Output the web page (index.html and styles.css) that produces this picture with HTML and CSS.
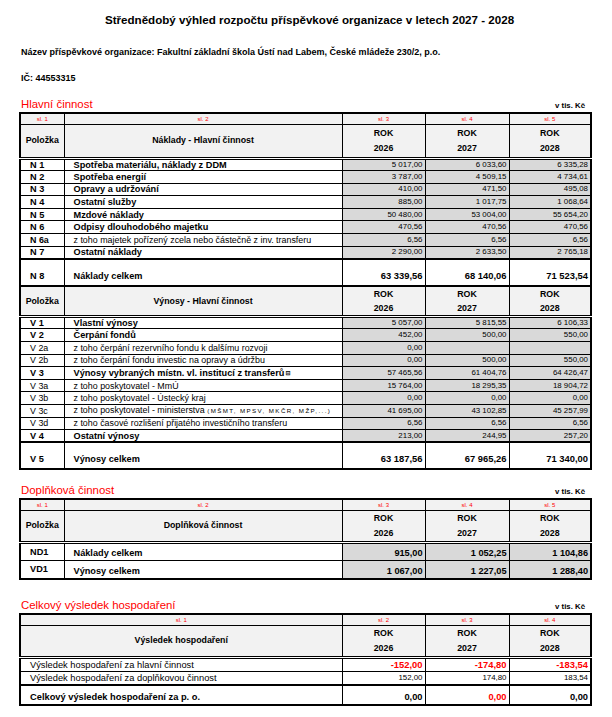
FILE: index.html
```html
<!DOCTYPE html>
<html lang="cs">
<head>
<meta charset="utf-8">
<title>Střednědobý výhled rozpočtu</title>
<link rel="stylesheet" href="styles.css">
</head>
<body>
<div class="page">
  <h1 class="title">Střednědobý výhled rozpočtu příspěvkové organizace v letech 2027 - 2028</h1>
  <p class="org">Název příspěvkové organizace: Fakultní základní škola Ústí nad Labem, České mládeže 230/2, p.o.</p>
  <p class="ic">IČ: 44553315</p>

  <div class="sec-head"><span class="sec-title">Hlavní činnost</span><span class="unit">v tis. Kč</span></div>
  <table class="grid">
    <colgroup><col class="c1"><col class="c2"><col class="c3"><col class="c4"><col class="c5"></colgroup>
    <tr class="sl"><td>sl. 1</td><td>sl. 2</td><td>sl. 3</td><td>sl. 4</td><td>sl. 5</td></tr>
    <tr class="hdr"><th>Položka</th><th>Náklady - Hlavní činnost</th><th>ROK<br>2026</th><th>ROK<br>2027</th><th>ROK<br>2028</th></tr>
    <tr class="r b"><td class="code">N 1</td><td class="lbl">Spotřeba materiálu, náklady z DDM</td><td class="num">5 017,00</td><td class="num">6 033,60</td><td class="num">6 335,28</td></tr>
    <tr class="r b"><td class="code">N 2</td><td class="lbl">Spotřeba energií</td><td class="num">3 787,00</td><td class="num">4 509,15</td><td class="num">4 734,61</td></tr>
    <tr class="r b"><td class="code">N 3</td><td class="lbl">Opravy a udržování</td><td class="num">410,00</td><td class="num">471,50</td><td class="num">495,08</td></tr>
    <tr class="r b"><td class="code">N 4</td><td class="lbl">Ostatní služby</td><td class="num">885,00</td><td class="num">1 017,75</td><td class="num">1 068,64</td></tr>
    <tr class="r b"><td class="code">N 5</td><td class="lbl">Mzdové náklady</td><td class="num">50 480,00</td><td class="num">53 004,00</td><td class="num">55 654,20</td></tr>
    <tr class="r b"><td class="code">N 6</td><td class="lbl">Odpisy dlouhodobého majetku</td><td class="num">470,56</td><td class="num">470,56</td><td class="num">470,56</td></tr>
    <tr class="r sub"><td class="code bc">N 6a</td><td class="lbl">z toho majetek pořízený zcela nebo částečně z inv. transferu</td><td class="num">6,56</td><td class="num">6,56</td><td class="num">6,56</td></tr>
    <tr class="r b"><td class="code">N 7</td><td class="lbl">Ostatní náklady</td><td class="num">2 290,00</td><td class="num">2 633,50</td><td class="num">2 765,18</td></tr>
    <tr class="tot"><td class="code">N 8</td><td class="lbl">Náklady celkem</td><td class="num">63 339,56</td><td class="num">68 140,06</td><td class="num">71 523,54</td></tr>
    <tr class="hdr hdr2"><th>Položka</th><th>Výnosy - Hlavní činnost</th><th>ROK<br>2026</th><th>ROK<br>2027</th><th>ROK<br>2028</th></tr>
    <tr class="r b"><td class="code">V 1</td><td class="lbl">Vlastní výnosy</td><td class="num">5 057,00</td><td class="num">5 815,55</td><td class="num">6 106,33</td></tr>
    <tr class="r b"><td class="code">V 2</td><td class="lbl">Čerpání fondů</td><td class="num">452,00</td><td class="num">500,00</td><td class="num">550,00</td></tr>
    <tr class="r sub"><td class="code">V 2a</td><td class="lbl">z toho čerpání rezervního fondu k dalšímu rozvoji</td><td class="num">0,00</td><td class="num"></td><td class="num"></td></tr>
    <tr class="r sub"><td class="code">V 2b</td><td class="lbl">z toho čerpání fondu investic na opravy a údržbu</td><td class="num">0,00</td><td class="num">500,00</td><td class="num">550,00</td></tr>
    <tr class="r b"><td class="code">V 3</td><td class="lbl">Výnosy vybraných místn. vl. institucí z transferů<span class="tofu">⊟</span></td><td class="num">57 465,56</td><td class="num">61 404,76</td><td class="num">64 426,47</td></tr>
    <tr class="r sub"><td class="code">V 3a</td><td class="lbl">z toho poskytovatel - MmÚ</td><td class="num">15 764,00</td><td class="num">18 295,35</td><td class="num">18 904,72</td></tr>
    <tr class="r sub"><td class="code">V 3b</td><td class="lbl">z toho poskytovatel - Ústecký kraj</td><td class="num">0,00</td><td class="num">0,00</td><td class="num">0,00</td></tr>
    <tr class="r sub"><td class="code">V 3c</td><td class="lbl">z toho poskytovatel - ministerstva <span class="tiny">(MŠMT, MPSV, MKČR, MŽP,...)</span></td><td class="num">41 695,00</td><td class="num">43 102,85</td><td class="num">45 257,99</td></tr>
    <tr class="r sub"><td class="code">V 3d</td><td class="lbl">z toho časové rozlišení přijatého investičního transferu</td><td class="num">6,56</td><td class="num">6,56</td><td class="num">6,56</td></tr>
    <tr class="r b"><td class="code">V 4</td><td class="lbl">Ostatní výnosy</td><td class="num">213,00</td><td class="num">244,95</td><td class="num">257,20</td></tr>
    <tr class="tot"><td class="code">V 5</td><td class="lbl">Výnosy celkem</td><td class="num">63 187,56</td><td class="num">67 965,26</td><td class="num">71 340,00</td></tr>
  </table>

  <div class="sec-head sec2"><span class="sec-title">Doplňková činnost</span><span class="unit">v tis. Kč</span></div>
  <table class="grid">
    <colgroup><col class="c1"><col class="c2"><col class="c3"><col class="c4"><col class="c5"></colgroup>
    <tr class="sl"><td>sl. 1</td><td>sl. 2</td><td>sl. 3</td><td>sl. 4</td><td>sl. 5</td></tr>
    <tr class="hdr hdr3"><th>Položka</th><th>Doplňková činnost</th><th>ROK<br>2026</th><th>ROK<br>2027</th><th>ROK<br>2028</th></tr>
    <tr class="dp"><td class="code">ND1</td><td class="lbl">Náklady celkem</td><td class="num">915,00</td><td class="num">1 052,25</td><td class="num">1 104,86</td></tr>
    <tr class="dp"><td class="code">VD1</td><td class="lbl">Výnosy celkem</td><td class="num">1 067,00</td><td class="num">1 227,05</td><td class="num">1 288,40</td></tr>
  </table>

  <div class="sec-head sec3"><span class="sec-title">Celkový výsledek hospodaření</span><span class="unit">v tis. Kč</span></div>
  <table class="grid res">
    <colgroup><col class="c1"><col class="c2"><col class="c3"><col class="c4"><col class="c5"></colgroup>
    <tr class="sl"><td colspan="2">sl. 1</td><td>sl. 2</td><td>sl. 3</td><td>sl. 4</td></tr>
    <tr class="hdr hdr3"><th colspan="2">Výsledek hospodaření</th><th>ROK<br>2026</th><th>ROK<br>2027</th><th>ROK<br>2028</th></tr>
    <tr class="rr"><td colspan="2" class="lbl">Výsledek hospodaření za hlavní činnost</td><td class="num neg">-152,00</td><td class="num neg">-174,80</td><td class="num neg">-183,54</td></tr>
    <tr class="rr"><td colspan="2" class="lbl">Výsledek hospodaření za doplňkovou činnost</td><td class="num">152,00</td><td class="num">174,80</td><td class="num">183,54</td></tr>
    <tr class="rt"><td colspan="2" class="lbl">Celkový výsledek hospodaření za p. o.</td><td class="num">0,00</td><td class="num neg">0,00</td><td class="num">0,00</td></tr>
  </table>
</div>
</body>
</html>
```

FILE: styles.css
```css
* { box-sizing: border-box; }
html, body { margin: 0; padding: 0; background: #fff; }
body {
  font-family: "Liberation Sans", Arial, sans-serif;
  color: #000;
  width: 612px;
}
.page { padding: 13px 0 0 19px; width: 612px; }

.title {
  margin: 0;
  padding-left: 10px;
  width: 571px;
  font-size: 11.6px;
  line-height: 14px;
  font-weight: bold;
  text-align: center;
}
.org {
  margin: 19px 0 0 2px;
  font-size: 9px;
  line-height: 12px;
  font-weight: bold;
}
.ic {
  margin: 14px 0 0 2px;
  font-size: 9px;
  line-height: 12px;
  font-weight: bold;
}

.sec-head {
  display: flex;
  justify-content: space-between;
  align-items: flex-end;
  width: 571px;
  margin-top: 12px;
  padding: 0 5px 0 2px;
  height: 15px;
}
.sec2 { margin-top: 12px; }
.sec3 { margin-top: 17px; }
.sec-title { color: #f00; font-size: 11.4px; line-height: 14px; }
.unit { font-size: 7.8px; font-weight: bold; line-height: 10px; }

.grid {
  border-collapse: collapse;
  table-layout: fixed;
  width: 571px;
  margin-top: 1px;
  border: 2px solid #000;
}
.c1 { width: 44px; }
.c2 { width: 278px; }
.c3 { width: 83px; }
.c4 { width: 84px; }
.c5 { width: 82px; }

.grid td, .grid th {
  border: 1px solid #000;
  padding: 0;
  white-space: nowrap;
  overflow: hidden;
}

.sl td {
  height: 11px;
  background: #f2f2f2;
  color: #f00;
  font-size: 6px;
  text-align: center;
  line-height: 8px;
}
.hdr th {
  height: 34px;
  background: #f2f2f2;
  font-size: 8.8px;
  line-height: 15px;
  font-weight: bold;
  text-align: center;
  border-bottom: 3px double #000;
}
.hdr2 th { border-top: 2px solid #000; height: 29px; line-height: 14px; }
.hdr3 th { height: 31px; }

.r td { height: 12.6px; font-size: 8.9px; line-height: 10px; }
.code { padding-left: 9px !important; text-align: left; }
.lbl { padding-left: 9px !important; text-align: left; }
.num {
  background: #d9d9d9;
  text-align: right;
  padding-right: 2px !important;
}
.r .num { font-size: 7.9px; }
.b .code, .b .lbl, .bc { font-weight: bold; }
.b .lbl, .b .code { font-size: 9.2px; }

.tofu { font-family: "DejaVu Sans", sans-serif; font-size: 6px; margin-left: 1px; vertical-align: 1px; }
.tiny { font-size: 6.2px; letter-spacing: 1.4px; }

.tot td {
  height: 27px;
  border-top: 2px solid #000;
  font-size: 9.2px;
  font-weight: bold;
  vertical-align: bottom;
  padding-bottom: 4px;
}
.tot .num { background: #fff; font-size: 9.4px; }

.dp td { height: 18.5px; font-size: 9.2px; font-weight: bold; vertical-align: bottom; padding-bottom: 2px; }
.dp .code { vertical-align: top; padding-top: 3px; }

.res .num { background: #fff; }
.rr td { height: 14px; font-size: 9.3px; }
.rr .num { font-weight: normal; font-size: 7.9px; }
.rr .num.neg, .neg { color: #f00; font-weight: bold; font-size: 9.4px; }
.rt td { height: 20px; border-top: 2px solid #000; font-size: 9.3px; font-weight: bold; vertical-align: bottom; padding-bottom: 2px; }
```
